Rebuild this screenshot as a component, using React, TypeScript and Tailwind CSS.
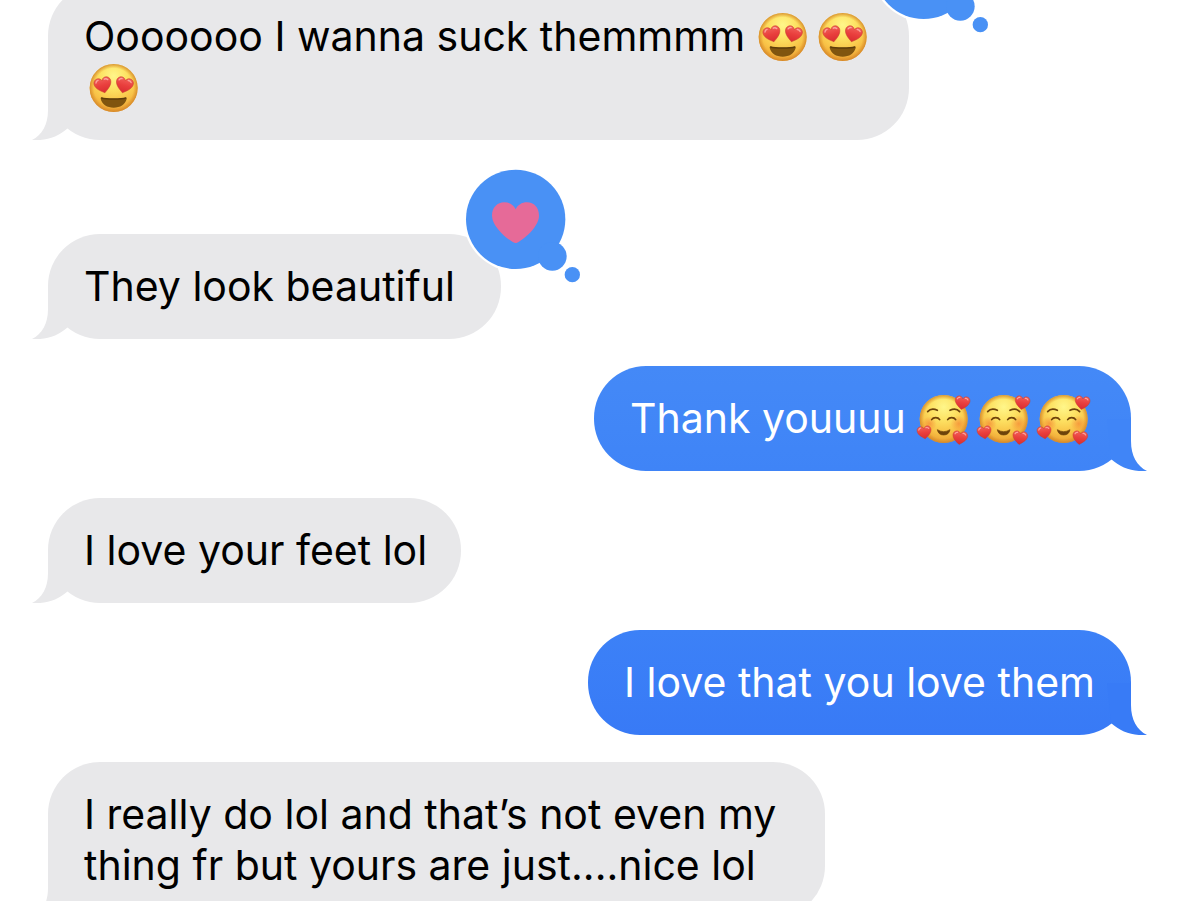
import type { ReactNode } from "react"
import clsx from "clsx"

type Emoji = "heartEyes" | "hearts"

interface ILine {
    text?: string;
    emojis?: Emoji[];
}

interface IMessage {
    lines: ILine[];
    sent?: boolean;
    loved?: boolean;
    className: string;
}

const messages: IMessage[] = [
    {
        lines: [
            { text: "Ooooooo I wanna suck themmmm", emojis: ["heartEyes", "heartEyes"] },
            { emojis: ["heartEyes"] },
        ],
        loved: true,
        className: "w-[861px]",
    },
    {
        lines: [{ text: "They look beautiful" }],
        loved: true,
        className: "mt-[67px] w-[453px]",
    },
    {
        lines: [{ text: "Thank youuuu", emojis: ["hearts", "hearts", "hearts"] }],
        sent: true,
        className: "w-[537px] bg-linear-to-b from-[#4489f7] to-[#3f84f7] text-[#4085f7]",
    },
    {
        lines: [{ text: "I love your feet lol" }],
        className: "w-[413px]",
    },
    {
        lines: [{ text: "I love that you love them" }],
        sent: true,
        className: "w-[543px] bg-linear-to-b from-[#3c81f7] to-[#387af6] text-[#387bf6]",
    },
    {
        lines: [
            { text: "I really do lol and that’s not even my" },
            { text: "thing fr but yours are just....nice lol" },
        ],
        className: "w-[777px]",
    },
]

const heartPath = "M0 24C-5 20-13 15-19 8C-25 1-27-7-25-13C-22-21-13-24-7-21C-3-19-1-16 0-13C1-16 3-19 7-21C13-24 22-21 25-13C27-7 25 1 19 8C13 15 5 20 0 24Z"

const EmojiDefs = () => (
    <svg className="absolute size-0" aria-hidden="true">
        <defs>
            <radialGradient id="face" cx="50%" cy="25%" r="78%">
                <stop offset="0" stopColor="#fff68a" />
                <stop offset="0.35" stopColor="#fde263" />
                <stop offset="0.7" stopColor="#f8c146" />
                <stop offset="1" stopColor="#e9992f" />
            </radialGradient>
            <radialGradient id="rim">
                <stop offset="0.82" stopColor="#d98a25" stopOpacity="0" />
                <stop offset="1" stopColor="#d08328" stopOpacity="0.8" />
            </radialGradient>
            <radialGradient id="blush">
                <stop offset="0" stopColor="#f4772f" stopOpacity="0.55" />
                <stop offset="1" stopColor="#f4772f" stopOpacity="0" />
            </radialGradient>
            <linearGradient id="heart" x1="0" y1="0" x2="0" y2="1">
                <stop offset="0" stopColor="#f2605a" />
                <stop offset="0.5" stopColor="#e93f3d" />
                <stop offset="1" stopColor="#d92c31" />
            </linearGradient>
        </defs>
    </svg>
)

const RedHeart = ({ transform }: { transform: string }) => (
    <g transform={transform}>
        <path d={heartPath} fill="url(#heart)" stroke="#c73a2c" strokeWidth="1.5" />
        <path d="M-19-11Q-17-17-11-17M8-16Q14-18 18-12" fill="none" stroke="#fba59c" strokeWidth="4" strokeLinecap="round" />
    </g>
)

const Face = ({ label, cx, children }: { label: string; cx: number; children: ReactNode }) => (
    <svg viewBox="0 0 180 180" role="img" aria-label={label} className="size-[60px] shrink-0">
        <circle cx={cx} cy="90" r="72" fill="url(#face)" />
        <circle cx={cx} cy="90" r="72" fill="url(#rim)" />
        {children}
    </svg>
)

const HeartEyes = () => (
    <Face label="Smiling face with heart eyes" cx={89}>
        <path d="M54 119C66 123 112 123 124 119Q129 118 128 123C123 140 109 149 89 149C69 149 55 140 50 123Q49 118 54 119Z" fill="#80550f" />
        <path d="M53 120C66 124 112 124 125 120" fill="none" stroke="#5e3d0a" strokeWidth="4" strokeLinecap="round" />
        <RedHeart transform="translate(57 81) rotate(-14)" />
        <RedHeart transform="translate(121 81) rotate(14)" />
    </Face>
)

const SmilingHearts = () => (
    <Face label="Smiling face with hearts" cx={89}>
        <circle cx="46" cy="104" r="22" fill="url(#blush)" />
        <circle cx="134" cy="104" r="24" fill="url(#blush)" />
        <g fill="none" stroke="#6d430b" strokeWidth="5" strokeLinecap="round">
            <path d="M41 68C48 60 60 59 70 64" />
            <path d="M108 64C118 59 130 60 137 68" />
            <path d="M53 92C58 84 72 84 77 92" />
            <path d="M101 92C106 84 120 84 125 92" />
        </g>
        <path d="M70 122Q89 134 108 122Q105 138 89 138Q73 138 70 122Z" fill="#6d430b" stroke="#6d430b" strokeWidth="2" strokeLinejoin="round" />
        <RedHeart transform="translate(145 41) rotate(8) scale(0.86)" />
        <RedHeart transform="translate(31 130) rotate(-8) scale(0.82)" />
        <RedHeart transform="translate(138 146) rotate(8) scale(0.86)" />
    </Face>
)

const Tail = ({ sent }: { sent?: boolean }) => (
    <svg
        viewBox="0 0 40 52"
        aria-hidden="true"
        className={clsx("absolute bottom-0 h-[52px] w-10", sent ? "-right-4 -scale-x-100" : "-left-4 text-[#e8e8ea]")}
    >
        <path d="M16 0V22C16 37 10 47 0 52C14 53 26 49 36 40L40 0Z" fill="currentColor" />
    </svg>
)

// thought bubble hanging off the top right corner of a message
const LoveReaction = () => (
    <svg viewBox="0 0 354 354" role="img" aria-label="Loved" className="absolute -top-[67px] -right-20 size-[118px]">
        <circle cx="158" cy="157" r="156" fill="#fff" />
        <g fill="#4991f5">
            <circle cx="158" cy="157" r="149" />
            <circle cx="268" cy="268" r="43" />
            <circle cx="328" cy="323" r="23" />
        </g>
        <path
            d="M158 228C148 228 87 184 87 146C87 122 103 106 124 106C140 106 152 114 158 127C164 114 176 106 192 106C213 106 228 122 228 146C228 184 168 228 158 228Z"
            fill="#e66a98"
        />
    </svg>
)

const Bubble = ({ lines, sent, loved, className }: IMessage) => (
    <li
        className={clsx(
            "relative max-w-full shrink-0 rounded-[52px] px-9 py-[27px]",
            sent ? "self-end" : "self-start bg-[#e8e8ea]",
            className
        )}
    >
        <Tail sent={sent} />
        {
            lines.map((line, index) => (
                <p key={index} className={clsx("relative flex h-[51px] items-center whitespace-nowrap", sent ? "text-white" : "text-black")}>
                    {line.text && <span className={clsx(line.emojis && "mr-2")}>{line.text}</span>}
                    {
                        line.emojis?.map((emoji, i) => (
                            emoji === "heartEyes" ? <HeartEyes key={i} /> : <SmilingHearts key={i} />
                        ))
                    }
                </p>
            ))
        }
        {loved && <LoveReaction />}
    </li>
)

const App = () => {
    return (
        <main className="h-screen overflow-hidden bg-white font-['Inter',sans-serif] text-[41px] leading-[51px]">
            <EmojiDefs />
            <ul className="-mt-4 flex flex-col gap-[27px] px-12">
                {
                    messages.map((message, index) => (
                        <Bubble key={index} {...message} />
                    ))
                }
            </ul>
        </main>
    )
}

export default App
